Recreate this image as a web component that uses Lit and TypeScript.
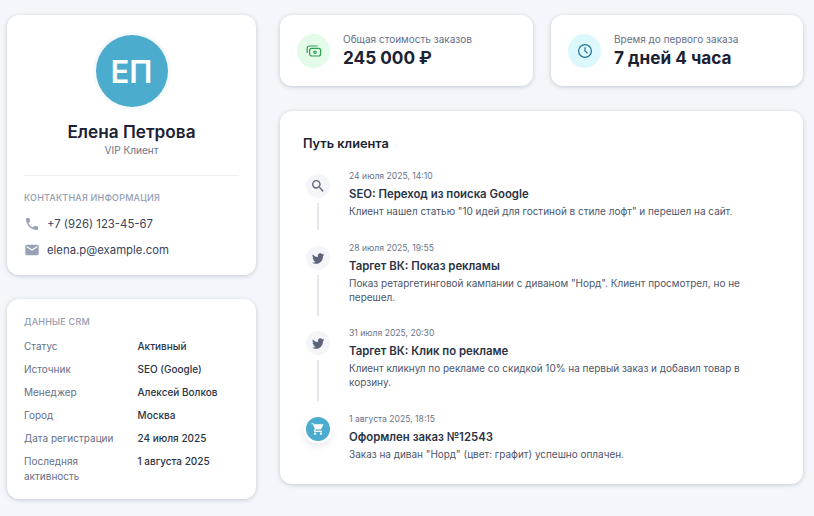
import { LitElement, html, css, svg } from "lit";
import { customElement } from "lit/decorators.js";

const search = svg`<path d="M15.5 14h-.79l-.28-.27A6.47 6.47 0 0 0 16 9.5 6.5 6.5 0 1 0 9.5 16c1.61 0 3.09-.59 4.23-1.57l.27.28v.79l5 4.99L20.49 19l-4.99-5zm-6 0C7.01 14 5 11.99 5 9.5S7.01 5 9.5 5 14 7.01 14 9.5 11.99 14 9.5 14z"/>`;
const bird = svg`<path d="M22.46 6c-.77.35-1.6.58-2.46.69a4.3 4.3 0 0 0 1.88-2.38c-.83.5-1.75.85-2.72 1.05A4.28 4.28 0 0 0 11.85 9.3c0 .34.04.67.11.98A12.16 12.16 0 0 1 3.15 5.8a4.28 4.28 0 0 0 1.33 5.71 4.2 4.2 0 0 1-1.94-.53v.05a4.28 4.28 0 0 0 3.43 4.2 4.3 4.3 0 0 1-1.93.07 4.28 4.28 0 0 0 4 2.98A8.6 8.6 0 0 1 1.7 20.1 12.13 12.13 0 0 0 8.29 22c7.88 0 12.2-6.54 12.2-12.2l-.01-.56A8.7 8.7 0 0 0 22.46 6z"/>`;
const cart = svg`<path d="M7 18c-1.1 0-1.99.9-1.99 2S5.9 22 7 22s2-.9 2-2-.9-2-2-2zM1 2v2h2l3.6 7.59-1.35 2.45c-.16.28-.25.61-.25.96 0 1.1.9 2 2 2h12v-2H7.42a.25.25 0 0 1-.25-.25l.03-.12.9-1.63h7.45c.75 0 1.41-.41 1.75-1.03l3.58-6.49A1 1 0 0 0 20 4H5.21l-.94-2H1zm16 16c-1.1 0-1.99.9-1.99 2s.89 2 1.99 2 2-.9 2-2-.9-2-2-2z"/>`;
const phone = svg`<path d="M6.62 10.79a15.15 15.15 0 0 0 6.59 6.59l2.2-2.2a1 1 0 0 1 1.02-.24c1.12.37 2.33.57 3.57.57a1 1 0 0 1 1 1V20a1 1 0 0 1-1 1A17 17 0 0 1 3 4a1 1 0 0 1 1-1h3.5a1 1 0 0 1 1 1c0 1.25.2 2.45.57 3.57a1 1 0 0 1-.25 1.02l-2.2 2.2z"/>`;
const mail = svg`<path d="M20 4H4a2 2 0 0 0-2 2v12c0 1.1.9 2 2 2h16a2 2 0 0 0 2-2V6a2 2 0 0 0-2-2zm0 4-8 5-8-5V6l8 5 8-5v2z"/>`;

const crm: [string, string][] = [
  ["Статус", "Активный"],
  ["Источник", "SEO (Google)"],
  ["Менеджер", "Алексей Волков"],
  ["Город", "Москва"],
  ["Дата регистрации", "24 июля 2025"],
  ["Последняя активность", "1 августа 2025"],
];

const events = [
  { icon: search, cls: "big", date: "24 июля 2025, 14:10", title: "SEO: Переход из поиска Google", text: 'Клиент нашел статью "10 идей для гостиной в стиле лофт" и перешел на сайт.' },
  { icon: bird, cls: "", date: "28 июля 2025, 19:55", title: "Таргет ВК: Показ рекламы", text: 'Показ ретаргетинговой кампании с диваном "Норд". Клиент просмотрел, но не перешел.' },
  { icon: bird, cls: "", date: "31 июля 2025, 20:30", title: "Таргет ВК: Клик по рекламе", text: "Клиент кликнул по рекламе со скидкой 10% на первый заказ и добавил товар в корзину." },
  { icon: cart, cls: "buy", date: "1 августа 2025, 18:15", title: "Оформлен заказ №12543", text: 'Заказ на диван "Норд" (цвет: графит) успешно оплачен.', last: true },
];

@customElement("app-root")
export class AppRoot extends LitElement {
  static styles = css`
    :host {
      display: block;
      min-height: 516px;
      box-sizing: border-box;
      background: #f4f6fb;
      font-family: Inter, "Liberation Sans", sans-serif;
      color: #1a2233;
      padding: 15px 11px 0 7px;
    }
    .layout {
      display: grid;
      grid-template-columns: 249px 523px;
      column-gap: 24px;
      align-items: start;
    }
    .col { display: flex; flex-direction: column; }
    .left { gap: 24px; }
    .right { gap: 25px; }
    .card {
      background: #fff;
      border-radius: 12px;
      box-shadow: 0 1px 4px rgba(30, 40, 70, 0.22);
      box-sizing: border-box;
    }
    .profile { height: 260px; padding: 20px 17px 0; display: flex; flex-direction: column; }
    .avatar {
      align-self: center;
      width: 72px; height: 72px;
      border-radius: 50%;
      background: #4bacce;
      color: #fff;
      display: flex; align-items: center; justify-content: center;
      font-size: 31px; font-weight: 600;
      box-shadow: 0 0 0 3px #f5f9fc;
    }
    .name { margin-top: 14px; text-align: center; font-size: 17.2px; line-height: 22px; font-weight: 600; color: #1a2233; }
    .role { text-align: center; font-size: 10.1px; line-height: 14px; color: #6a7488; }
    .divider { height: 1px; background: #eceff4; margin-top: 18px; }
    .section { font-size: 9px; line-height: 12px; font-weight: 500; letter-spacing: 0.2px; text-transform: uppercase; color: #949db0; }
    .profile .section { margin-top: 16px; }
    .contact { display: flex; align-items: center; gap: 7px; font-size: 11.35px; line-height: 16px; color: #39435a; }
    .contact svg { width: 16px; height: 16px; fill: #98a2b6; flex: none; }
    .contact.first { margin-top: 12px; }
    .contact.second { margin-top: 10px; }
    .crm { height: 200px; padding: 17px 17px 0; }
    .rows { margin-top: 11px; display: grid; grid-template-columns: 113.5px 1fr; row-gap: 8.5px; font-size: 10px; line-height: 14.5px; }
    .k { color: #667086; padding-right: 12px; }
    .v { color: #2b3447; font-weight: 500; }
    .stats { display: grid; grid-template-columns: 253px 252px; column-gap: 18px; }
    .stat { height: 71px; display: flex; align-items: center; gap: 13px; padding-left: 17px; }
    .stat-icon { width: 33px; height: 34px; border-radius: 50%; display: flex; align-items: center; justify-content: center; flex: none; }
    .green { background: #e4fbe9; }
    .cyan { background: #dcf8fd; }
    .stat-body { padding-bottom: 2px; }
    .stat-label { font-size: 10px; line-height: 14px; color: #667086; }
    .stat-value { font-size: 17.2px; line-height: 21px; font-weight: 700; color: #1a2233; margin-top: 1px; }
    .timeline { height: 373px; padding: 24px 23px 0; }
    h2 { margin: 0; font-size: 12.75px; line-height: 18px; font-weight: 600; color: #1a2233; }
    .events { margin-top: 17px; display: flex; flex-direction: column; gap: 23.7px; }
    .event { display: grid; grid-template-columns: 30px 1fr; column-gap: 16px; }
    .dot { width: 24px; height: 24px; border-radius: 50%; background: #f3f5f9; display: flex; align-items: center; justify-content: center; margin-top: 4px; flex: none; }
    .dot svg { width: 14px; height: 14px; fill: #5b6478; }
    .dot.big svg { width: 16px; height: 16px; }
    .dot.buy { background: #4bacce; box-shadow: 0 0 0 2.5px #fff, 0 4px 10px rgba(40, 70, 100, 0.18); }
    .dot.buy svg { fill: #fff; }
    .rail { display: flex; flex-direction: column; align-items: center; }
    .line { width: 1.5px; flex: 1; background: #e4e7ed; margin-top: 5px; margin-bottom: -12px; }
    .date { font-size: 8.6px; line-height: 13px; color: #6a7488; }
    .title { margin-top: 3px; font-size: 11.36px; line-height: 16px; font-weight: 600; color: #2a3345; }
    .text { margin-top: 2px; font-size: 9.96px; line-height: 14px; color: #4c566b; }
  `;

  render() {
    return html`
      <div class="layout">
        <div class="col left">
          <section class="card profile">
            <div class="avatar">ЕП</div>
            <div class="name">Елена Петрова</div>
            <div class="role">VIP Клиент</div>
            <div class="divider"></div>
            <div class="section">Контактная информация</div>
            <div class="contact first"><svg viewBox="0 0 24 24">${phone}</svg>+7 (926) 123-45-67</div>
            <div class="contact second"><svg viewBox="0 0 24 24">${mail}</svg>elena.p@example.com</div>
          </section>
          <section class="card crm">
            <div class="section">Данные CRM</div>
            <div class="rows">
              ${crm.map(([k, v]) => html`<div class="k">${k}</div><div class="v">${v}</div>`)}
            </div>
          </section>
        </div>
        <div class="col right">
          <div class="stats">
            <section class="card stat">
              <div class="stat-icon green">
                <svg width="16" height="16" viewBox="0 0 16 16" fill="none" stroke="#2f9e52" stroke-width="1.2">
                  <rect x="3.6" y="5.4" width="11" height="7.6" rx="2"/>
                  <path d="M11.5 3H3.2A2 2 0 0 0 1.2 5v5"/>
                  <circle cx="9.1" cy="9.2" r="1.2"/>
                </svg>
              </div>
              <div class="stat-body">
                <div class="stat-label">Общая стоимость заказов</div>
                <div class="stat-value">245 000 ₽</div>
              </div>
            </section>
            <section class="card stat">
              <div class="stat-icon cyan">
                <svg width="16" height="16" viewBox="0 0 16 16" fill="none" stroke="#1f7396" stroke-width="1.2" stroke-linecap="round">
                  <circle cx="8" cy="8" r="6.4"/>
                  <path d="M8 4.6V8l2.1 1.8"/>
                </svg>
              </div>
              <div class="stat-body">
                <div class="stat-label">Время до первого заказа</div>
                <div class="stat-value">7 дней 4 часа</div>
              </div>
            </section>
          </div>
          <section class="card timeline">
            <h2>Путь клиента</h2>
            <div class="events">
              ${events.map((e) => html`
                <div class="event">
                  <div class="rail">
                    <div class="dot ${e.cls}"><svg viewBox="0 0 24 24">${e.icon}</svg></div>
                    ${e.last ? "" : html`<div class="line"></div>`}
                  </div>
                  <div>
                    <div class="date">${e.date}</div>
                    <div class="title">${e.title}</div>
                    <div class="text">${e.text}</div>
                  </div>
                </div>`)}
            </div>
          </section>
        </div>
      </div>
    `;
  }
}
